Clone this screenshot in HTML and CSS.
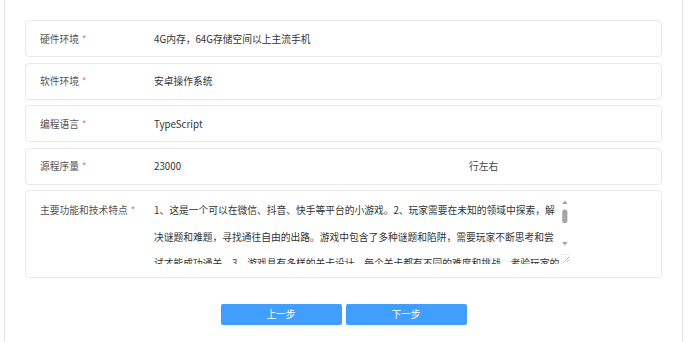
FILE: index.html
```html
<!DOCTYPE html>
<html lang="zh-CN">
<head>
<meta charset="utf-8">
<title>软件信息</title>
<link rel="stylesheet" href="styles.css">
</head>
<body>
<div class="page">
  <div class="form">
    <div class="row">
      <div class="label">硬件环境<span class="req">*</span></div>
      <div class="value">4G内存，64G存储空间以上主流手机</div>
    </div>
    <div class="row">
      <div class="label">软件环境<span class="req">*</span></div>
      <div class="value">安卓操作系统</div>
    </div>
    <div class="row">
      <div class="label">编程语言<span class="req">*</span></div>
      <div class="value">TypeScript</div>
    </div>
    <div class="row">
      <div class="label">源程序量<span class="req">*</span></div>
      <div class="value split"><span class="num">23000</span><span class="suffix">行左右</span></div>
    </div>
    <div class="row row-tall">
      <div class="label">主要功能和技术特点<span class="req">*</span></div>
      <div class="ta-wrap">
        <textarea class="ta" readonly>1、这是一个可以在微信、抖音、快手等平台的小游戏。2、玩家需要在未知的领域中探索，解决谜题和难题，寻找通往自由的出路。游戏中包含了多种谜题和陷阱，需要玩家不断思考和尝试才能成功通关。3、游戏具有多样的关卡设计，每个关卡都有不同的难度和挑战，考验玩家的智慧和反应能力。4、游戏画面精美，音效逼真，给玩家带来沉浸式的游戏体验。5、游戏采用TypeScript语言开发，支持多平台发布，运行流畅稳定。</textarea>
        <svg class="sb" width="10" height="67" viewBox="0 0 10 67" aria-hidden="true">
          <path d="M3.8 3.5 L6.6 7 L1 7 Z" fill="#a6a6a6"/>
          <rect x="1.2" y="12.5" width="5.2" height="13.5" rx="2.6" fill="#a6a6a6"/>
          <path d="M1 45 L6.6 45 L3.8 48.5 Z" fill="#a6a6a6"/>
          <path d="M0.5 67 L0.5 57.5 L10 57.5" fill="none" stroke="#ececec" stroke-width="1"/>
          <path d="M8.5 59.5 L2.5 65.5 M8.5 62.5 L5.5 65.5" stroke="#a9a9a9" stroke-width="0.8" fill="none"/>
        </svg>
      </div>
    </div>
  </div>
  <div class="actions">
    <button class="btn" type="button">上一步</button>
    <button class="btn" type="button">下一步</button>
  </div>
</div>
</body>
</html>
```

FILE: styles.css
```css
html, body {
  margin: 0;
  padding: 0;
  background: #ffffff;
}

body {
  font-family: "Noto Sans CJK SC", "Noto Sans", "Liberation Sans", sans-serif;
  font-size: 9.75px;
  color: #333333;
}

.page {
  box-sizing: border-box;
  width: 679px;
  min-height: 342px;
  margin-left: 4px;
  border-left: 1px solid #e4e4e4;
  border-right: 1px solid #e4e4e4;
  padding: 20px 20px 0 20px;
}

.form {
  display: flex;
  flex-direction: column;
  gap: 5.5px;
}

.row {
  box-sizing: border-box;
  height: 37px;
  border: 1px solid #e9e9e9;
  border-radius: 4px;
  display: grid;
  grid-template-columns: 114px 1fr;
  align-items: center;
  padding-left: 14px;
}

.row-tall {
  height: 88px;
  align-items: start;
}

.label {
  color: #555555;
  line-height: 24px;
  white-space: nowrap;
}

.row-tall .label {
  padding-top: 7px;
}

.req {
  color: #f56c6c;
  margin-left: 3px;
}

.value {
  color: #333333;
  line-height: 24px;
}

.split {
  display: flex;
}

.num {
  width: 315px;
}

.suffix {
  color: #444444;
}

.ta-wrap {
  position: relative;
  width: 422px;
  height: 67px;
  margin-top: 6px;
  margin-left: -5px;
}

.ta {
  box-sizing: border-box;
  display: block;
  width: 422px;
  height: 67px;
  margin: 0;
  padding: 0 10px 0 5px;
  border: none;
  outline: none;
  resize: none;
  overflow: hidden;
  background: transparent;
  font-family: inherit;
  font-size: 9.75px;
  line-height: 26.5px;
  color: #333333;
}

.sb {
  position: absolute;
  top: 0;
  right: 0;
  display: block;
}

.actions {
  display: flex;
  justify-content: center;
  gap: 4px;
  margin-top: 26px;
}

.btn {
  width: 121px;
  height: 21px;
  padding: 0;
  border: none;
  border-radius: 2px;
  background: #409eff;
  color: #ffffff;
  font-family: inherit;
  font-size: 9.75px;
  line-height: 21px;
  cursor: pointer;
}
```
